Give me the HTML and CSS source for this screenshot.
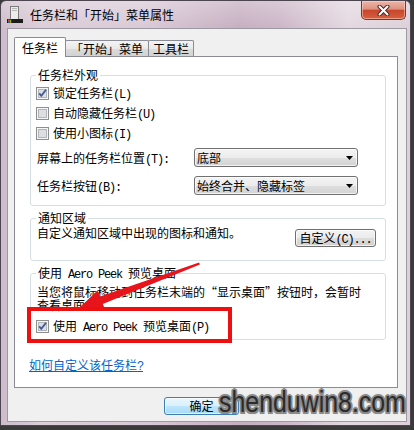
FILE: index.html
```html
<!DOCTYPE html>
<html lang="zh-CN">
<head>
<meta charset="utf-8">
<title>任务栏和「开始」菜单属性</title>
<link rel="stylesheet" href="styles.css">
</head>
<body>
<div class="window">
  <div class="titlebar">
    <svg class="app-icon" width="16" height="18" viewBox="0 0 16 18">
      <rect x="3.5" y="0.5" width="8" height="13" fill="#ececec" stroke="#7a7a7a"/>
      <rect x="5" y="2" width="5" height="1" fill="#b5b5b5"/>
      <rect x="5" y="4" width="5" height="1" fill="#b5b5b5"/>
      <rect x="0" y="13" width="16" height="4" fill="#1c1c1c"/>
      <rect x="1" y="13.5" width="1.5" height="1.5" fill="#e84a2a"/>
      <rect x="2.7" y="13.5" width="1.5" height="1.5" fill="#5cb82e"/>
      <rect x="1" y="15.2" width="1.5" height="1.5" fill="#2a8ae0"/>
      <rect x="2.7" y="15.2" width="1.5" height="1.5" fill="#f0c020"/>
    </svg>
    <span class="title">任务栏和「开始」菜单属性</span>
    <div class="close">
      <svg width="13" height="11" viewBox="0 0 13 11">
        <path d="M2.5 1.5 L10.5 9.5 M10.5 1.5 L2.5 9.5" stroke="#4b2a2a" stroke-width="4" stroke-linecap="round" fill="none"/>
        <path d="M2.5 1.5 L10.5 9.5 M10.5 1.5 L2.5 9.5" stroke="#ffffff" stroke-width="2" stroke-linecap="round" fill="none"/>
      </svg>
    </div>
  </div>

  <div class="client">
    <div class="tabs">
      <div class="tab active t1">任务栏</div>
      <div class="tab t2">「开始」菜单</div>
      <div class="tab t3">工具栏</div>
    </div>
    <div class="panel">
      <div class="group g1">
        <div class="group-title">任务栏外观</div>
        <div class="check-row first">
          <svg class="cb" width="13" height="13" viewBox="0 0 13 13">
            <rect x="0.5" y="0.5" width="12" height="12" fill="#f6f6f6" stroke="#8e8f8f"/>
            <rect x="2.5" y="2.5" width="8" height="8" fill="#dcdee2" stroke="#b2b6bc"/>
            <path d="M3.2 6.4 L5.3 8.8 L10 2.8" stroke="#3f5a93" stroke-width="1.8" fill="none"/>
          </svg>
          <span>锁定任务栏<span class="h">(L)</span></span>
        </div>
        <div class="check-row">
          <svg class="cb" width="13" height="13" viewBox="0 0 13 13">
            <rect x="0.5" y="0.5" width="12" height="12" fill="#f6f6f6" stroke="#8e8f8f"/>
            <rect x="2.5" y="2.5" width="8" height="8" fill="#dcdee2" stroke="#b2b6bc"/>
          </svg>
          <span>自动隐藏任务栏<span class="h">(U)</span></span>
        </div>
        <div class="check-row">
          <svg class="cb" width="13" height="13" viewBox="0 0 13 13">
            <rect x="0.5" y="0.5" width="12" height="12" fill="#f6f6f6" stroke="#8e8f8f"/>
            <rect x="2.5" y="2.5" width="8" height="8" fill="#dcdee2" stroke="#b2b6bc"/>
          </svg>
          <span>使用小图标<span class="h">(I)</span></span>
        </div>
        <div class="combo-row r1">
          <span class="combo-label">屏幕上的任务栏位置<span class="h">(T):</span></span>
          <div class="combo"><span>底部</span>
            <svg width="7" height="4" viewBox="0 0 7 4"><path d="M0 0 H7 L3.5 4 Z" fill="#000"/></svg>
          </div>
        </div>
        <div class="combo-row r2">
          <span class="combo-label">任务栏按钮<span class="h">(B):</span></span>
          <div class="combo"><span>始终合并、隐藏标签</span>
            <svg width="7" height="4" viewBox="0 0 7 4"><path d="M0 0 H7 L3.5 4 Z" fill="#000"/></svg>
          </div>
        </div>
      </div>

      <div class="group g2">
        <div class="group-title">通知区域</div>
        <div class="notify-row">
          <span class="notify-text">自定义通知区域中出现的图标和通知。</span>
          <div class="btn">自定义<span class="h">(C)...</span></div>
        </div>
      </div>

      <div class="group g3">
        <div class="group-title">使用<span class="h"> Aero Peek </span>预览桌面</div>
        <div class="desc">当您将鼠标移动到任务栏末端的“显示桌面”按钮时，会暂时<br>查看桌面。</div>
        <div class="check-row peek">
          <svg class="cb" width="13" height="13" viewBox="0 0 13 13">
            <rect x="0.5" y="0.5" width="12" height="12" fill="#f6f6f6" stroke="#8e8f8f"/>
            <rect x="2.5" y="2.5" width="8" height="8" fill="#dcdee2" stroke="#b2b6bc"/>
            <path d="M3.2 6.4 L5.3 8.8 L10 2.8" stroke="#3f5a93" stroke-width="1.8" fill="none"/>
          </svg>
          <span>使用<span class="h"> Aero Peek </span>预览桌面<span class="h">(P)</span></span>
        </div>
      </div>

      <a class="help" href="#">如何自定义该任务栏<span class="h">?</span></a>
    </div>
    <div class="buttons">
      <div class="btn default">确定</div>
    </div>
  </div>

  <svg class="arrow" width="414" height="430" viewBox="0 0 414 430">
    <polygon points="199.1,262.4 100,296.5 97.5,290.5 78,309 105.2,309.8 102.8,303.9 199.9,264.6" fill="#e8141c"/>
  </svg>
  <div class="redbox"></div>
  <div class="watermark">shenduwin8.com</div>
</div>
</body>
</html>
```

FILE: styles.css
```css
* { box-sizing: border-box; }

html, body {
  margin: 0;
  padding: 0;
}

body {
  width: 414px;
  height: 430px;
  overflow: hidden;
  background: #3a3a3a;
  font-family: "Noto Sans CJK SC", sans-serif;
  font-size: 12px;
  color: #000;
}

.h {
  font-family: "Liberation Mono", monospace;
  font-size: 12px;
  letter-spacing: -1.2px;
  white-space: pre;
}

.window {
  position: relative;
  width: 411px;
  height: 426px;
  border: 1px solid #4d4550;
  border-radius: 6px 6px 0 0;
  display: flex;
  flex-direction: column;
  background:
    linear-gradient(180deg, rgba(255,255,255,0.28), rgba(255,255,255,0) 28px),
    linear-gradient(90deg, #cdbccb 0%, #dccdd9 10%, #d9c9d6 35%, #c6aec1 58%, #cbb5c7 68%, #e4d8e0 85%, #dccfd9 100%);
}

/* title bar */
.titlebar {
  height: 27px;
  display: flex;
  align-items: center;
  padding-left: 6px;
  flex: none;
}

.app-icon {
  flex: none;
  margin-right: 7px;
}

.title {
  font-size: 12px;
  line-height: 14px;
  color: #000;
  margin-top: 1px;
}

.close {
  margin-left: auto;
  margin-right: 4px;
  align-self: flex-start;
  width: 45px;
  height: 19px;
  border: 1px solid #6a3c3c;
  border-top: none;
  border-radius: 0 0 5px 5px;
  background: linear-gradient(180deg, #ebb6a9 0%, #de917f 45%, #c8462b 52%, #d6603f 100%);
  box-shadow: inset 0 0 0 1px rgba(255,220,210,0.5);
  display: flex;
  align-items: center;
  justify-content: center;
}

/* client area */
.client {
  flex: none;
  height: 394px;
  margin: 0 3px 0 6px;
  border: 1px solid #9c9aa0;
  background: #f0f0f0;
  display: flex;
  flex-direction: column;
}

.tabs {
  height: 19px;
  margin: 8px 0 0 6px;
  display: flex;
  align-items: flex-end;
  flex: none;
  position: relative;
  z-index: 1;
}

.tab {
  height: 16px;
  border: 1px solid #898c95;
  border-bottom: none;
  border-radius: 2px 2px 0 0;
  background: linear-gradient(180deg, #f4f4f4 0%, #e9e9e9 50%, #dcdcdc 51%, #d2d2d2 100%);
  line-height: 15px;
  text-align: center;
  white-space: nowrap;
}

.tab.active {
  height: 20px;
  margin-bottom: -1px;
  background: #fff;
  line-height: 19px;
}

.t1 { width: 52px; }
.t2 { width: 84px; margin-left: -1px; }
.t3 { width: 46px; margin-left: -1px; }

.panel {
  flex: none;
  height: 332px;
  margin: 0 8px 0 6px;
  border: 1px solid #898c95;
  background: #fff;
  padding: 0 11px 0 15px;
}

/* group boxes */
.group {
  border: 1px solid #d5dfe5;
  border-radius: 3px;
  padding-left: 5px;
  padding-right: 9px;
}

.group-title {
  width: fit-content;
  margin: -8px 0 0 0;
  padding: 0 2px;
  background: #fff;
  line-height: 14px;
  white-space: nowrap;
}

.g1 { margin-top: 18px; padding-bottom: 10px; }
.g2 { margin-top: 12px; padding-bottom: 13px; }
.g3 { margin-top: 12px; padding-bottom: 3px; }

.check-row {
  height: 20px;
  display: flex;
  align-items: center;
  gap: 4px;
  white-space: nowrap;
}

.check-row.first { margin-top: 1px; }
.check-row.peek { margin-top: 5px; }

.cb { flex: none; display: block; }

.combo-row {
  display: flex;
  align-items: center;
  height: 19px;
}

.combo-row.r1 { margin-top: 5px; }
.combo-row.r2 { margin-top: 9px; }

.combo-label {
  width: 158px;
  padding-left: 1px;
  white-space: nowrap;
}

.combo {
  width: 164px;
  height: 19px;
  border: 1px solid #707070;
  border-radius: 3px;
  background: linear-gradient(180deg, #f4f4f4 0%, #ececec 50%, #dfdfdf 51%, #d3d3d3 100%);
  box-shadow: inset 0 0 0 1px rgba(255,255,255,0.7);
  padding: 0 4px 0 2px;
  display: flex;
  align-items: center;
  justify-content: space-between;
  line-height: 16px;
}

.combo svg { display: block; }

.notify-row {
  margin-top: 1px;
  display: flex;
  justify-content: space-between;
  align-items: flex-start;
}

.notify-text {
  padding-left: 1px;
  line-height: 14px;
}

.btn {
  width: 81px;
  height: 18px;
  margin-top: 3px;
  border: 1px solid #707070;
  border-radius: 3px;
  background: linear-gradient(180deg, #f3f3f3 0%, #ebebeb 50%, #dddddd 51%, #cfcfcf 100%);
  box-shadow: inset 0 0 0 1px rgba(255,255,255,0.7);
  text-align: center;
  line-height: 16px;
  white-space: nowrap;
}

.desc {
  margin-top: 3px;
  padding-left: 1px;
  line-height: 13px;
  white-space: nowrap;
}

.help {
  display: block;
  width: fit-content;
  margin: 18px 0 0 -1px;
  line-height: 14px;
  color: #0066cc;
  text-decoration: underline;
}

.buttons {
  display: flex;
  margin-top: 9px;
}

.btn.default {
  width: 75px;
  margin: 0 0 0 156px;
  border-color: #3c7fb1;
  background: linear-gradient(180deg, #eaf6fd 0%, #d9f0fc 50%, #bee6fd 51%, #a7d9f5 100%);
  box-shadow: inset 0 0 0 1px rgba(255,255,255,0.6);
}

/* annotation overlays */
.arrow {
  position: absolute;
  left: -1px;
  top: -1px;
  pointer-events: none;
}

.redbox {
  position: absolute;
  left: 26px;
  top: 306px;
  width: 205px;
  height: 36px;
  border: 4px solid #ee1010;
}

.watermark {
  position: absolute;
  left: 218px;
  top: 386px;
  font-family: "Liberation Sans", Arial, sans-serif;
  font-size: 30px;
  line-height: 30px;
  color: #2c2c2c;
  white-space: nowrap;
  transform: scaleX(0.83);
  transform-origin: left top;
  text-shadow:
    -2px 0 0 #8a8a8a, 2px 0 0 #8a8a8a, 0 -2px 0 #8a8a8a, 0 2px 0 #8a8a8a,
    -1.5px -1.5px 0 #8a8a8a, 1.5px -1.5px 0 #8a8a8a, -1.5px 1.5px 0 #8a8a8a, 1.5px 1.5px 0 #8a8a8a,
    0 0 4px #a0a0a0;
}
```
